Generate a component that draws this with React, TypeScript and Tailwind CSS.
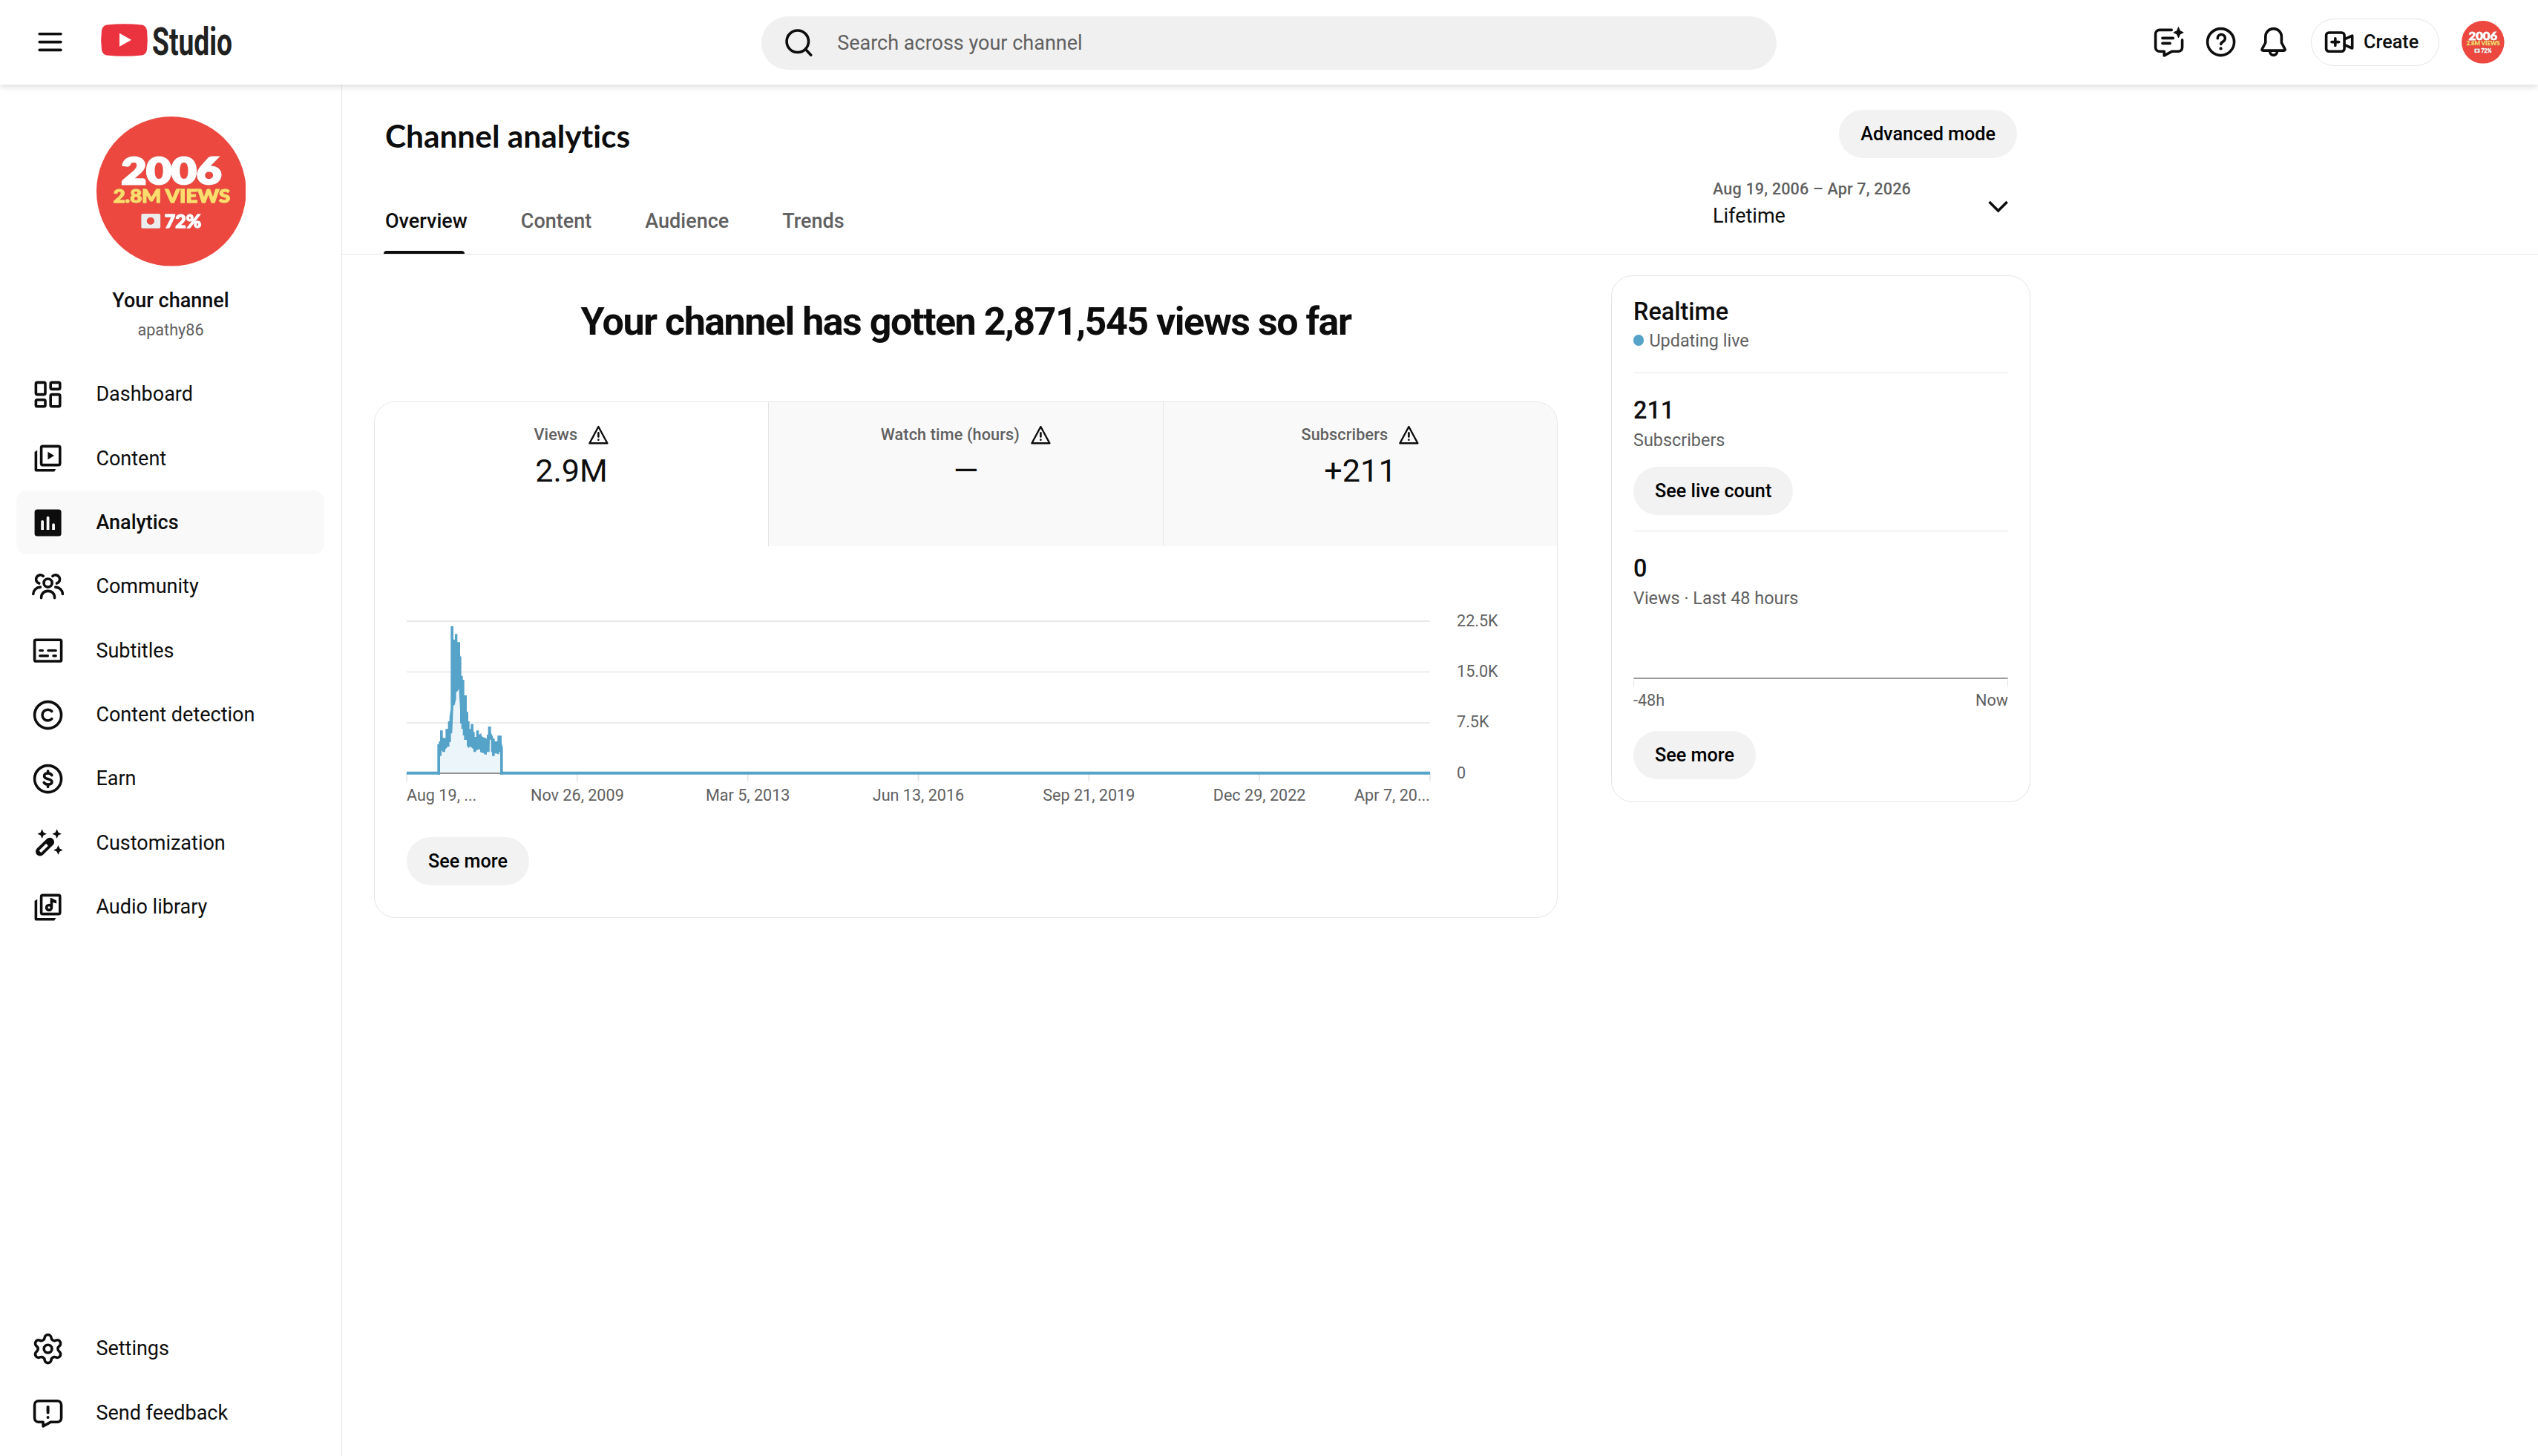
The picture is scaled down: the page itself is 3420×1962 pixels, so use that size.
import type { ReactNode } from "react";

interface IconProps {
  children: ReactNode;
  className?: string;
}

function Icon({ children, className = "size-[43.2px]" }: IconProps) {
  return (
    <svg
      viewBox="0 0 24 24"
      fill="none"
      stroke="currentColor"
      strokeWidth={2}
      strokeLinecap="round"
      strokeLinejoin="round"
      className={`shrink-0 ${className}`}
    >
      {children}
    </svg>
  );
}

const stackFrame = (
  <>
    <rect x="7" y="3" width="14" height="14" rx="1" />
    <path d="M2 7.2L4 6v14h14l-1.2 2H3.5A1.5 1.5 0 0 1 2 20.5z" fill="currentColor" stroke="none" />
  </>
);

const icons: Record<string, ReactNode> = {
  dashboard: (
    <>
      <rect x="3" y="3" width="7" height="9" rx="1" />
      <rect x="14" y="3" width="7" height="5" rx="1" />
      <rect x="3" y="16" width="7" height="5" rx="1" />
      <rect x="14" y="12" width="7" height="9" rx="1" />
    </>
  ),
  content: (
    <>
      {stackFrame}
      <path d="M11.9 7.1l4.8 2.9-4.8 2.9z" fill="currentColor" stroke="none" />
    </>
  ),
  analytics: (
    <>
      <rect x="2" y="2" width="20" height="20" rx="2" fill="currentColor" stroke="none" />
      <g fill="#f9f9f9" stroke="none">
        <path d="M6.8 17.2v-6.2a1.05 1.05 0 0 1 2.1 0v6.2z" />
        <path d="M10.95 17.2v-9a1.05 1.05 0 0 1 2.1 0v9z" />
        <path d="M15.1 17.2v-3.8a1.05 1.05 0 0 1 2.1 0v3.8z" />
      </g>
    </>
  ),
  community: (
    <>
      <circle cx="12" cy="9.2" r="3.1" />
      <path d="M7 20.4c0-3.2 2-5.2 5-5.2s5 2 5 5.2" />
      <path d="M8.5 4.1A3.2 3.2 0 1 0 5.4 9.5M15.5 4.1A3.2 3.2 0 1 1 18.6 9.5" />
      <path d="M1 17.5c.2-3 2.2-5 5.3-5.2M23 17.5c-.2-3-2.2-5-5.3-5.2" />
    </>
  ),
  subtitles: (
    <>
      <rect x="2" y="4" width="20" height="16" rx="1" />
      <path d="M6 12h2M12.2 12h5.7M6 16h5.9M16.1 16h1.8" strokeWidth={1.9} />
    </>
  ),
  copyright: (
    <>
      <circle cx="12" cy="12" r="10" />
      <path d="M14.9 9.2A4.1 4.1 0 1 0 14.9 14.8" />
    </>
  ),
  earn: (
    <>
      <circle cx="12" cy="12" r="10" />
      <path d="M14.9 9.2c-.5-.9-1.5-1.4-2.9-1.4-1.7 0-2.8.8-2.8 2.1 0 3 5.8 1.3 5.8 4.3 0 1.3-1.3 2-3 2-1.5 0-2.5-.6-3-1.5M12 6.1v1.5M12 16.5v1.5" />
    </>
  ),
  customization: (
    <>
      <path d="M6.1 18.1l7.3-7.2" strokeWidth={6.6} />
      <path d="M6.1 18.1l5.3-5.2" stroke="#fff" strokeWidth={2.2} strokeLinecap="butt" />
      <g fill="currentColor" stroke="none">
        <path d="M7.6 1.3l1.1 2.4 2.4 1.1-2.4 1.1-1.1 2.4-1.1-2.4-2.4-1.1 2.4-1.1z" />
        <path d="M18.7 1.3l1.1 2.4 2.4 1.1-2.4 1.1-1.1 2.4-1.1-2.4-2.4-1.1 2.4-1.1z" />
        <path d="M19.7 13.4l1.1 2.4 2.4 1.1-2.4 1.1-1.1 2.4-1.1-2.4-2.4-1.1 2.4-1.1z" />
      </g>
    </>
  ),
  audio: (
    <>
      {stackFrame}
      <circle cx="12.8" cy="12.2" r="1.9" />
      <path d="M13.7 12V5.2l.8-.2 3.9 1.9v2.3l-2.7-.8V12z" fill="currentColor" stroke="none" />
    </>
  ),
  settings: (
    <>
      <path
        transform="translate(12 12) scale(1.06) translate(-12 -12)"
        strokeWidth={1.88}
        d="M9.671 4.136a2.34 2.34 0 0 1 4.659 0 2.34 2.34 0 0 0 3.319 1.915 2.34 2.34 0 0 1 2.33 4.033 2.34 2.34 0 0 0 0 3.831 2.34 2.34 0 0 1-2.33 4.033 2.34 2.34 0 0 0-3.319 1.915 2.34 2.34 0 0 1-4.659 0 2.34 2.34 0 0 0-3.32-1.915 2.34 2.34 0 0 1-2.33-4.033 2.34 2.34 0 0 0 0-3.831A2.34 2.34 0 0 1 6.35 6.051a2.34 2.34 0 0 0 3.319-1.915"
      />
      <circle cx="12" cy="12" r="3" />
    </>
  ),
  feedback: (
    <>
      <path d="M5 3.2h14a3 3 0 0 1 3 3V16a3 3 0 0 1-3 3h-4.8l-5.8 3.2V19H5a3 3 0 0 1-3-3V6.2a3 3 0 0 1 3-3z" />
      <path d="M12 7.7v4.2M12 15.5v.1" strokeWidth={2.2} />
    </>
  ),
};

interface NavItem {
  label: string;
  icon: string;
  active?: boolean;
}

const mainNav: NavItem[] = [
  { label: "Dashboard", icon: "dashboard" },
  { label: "Content", icon: "content" },
  { label: "Analytics", icon: "analytics", active: true },
  { label: "Community", icon: "community" },
  { label: "Subtitles", icon: "subtitles" },
  { label: "Content detection", icon: "copyright" },
  { label: "Earn", icon: "earn" },
  { label: "Customization", icon: "customization" },
  { label: "Audio library", icon: "audio" },
];

const footerNav: NavItem[] = [
  { label: "Settings", icon: "settings" },
  { label: "Send feedback", icon: "feedback" },
];

const tabs = ["Overview", "Content", "Audience", "Trends"];

const metrics = [
  { label: "Views", value: "2.9M", cell: "w-[530px] bg-white" },
  { label: "Watch time (hours)", value: "—", cell: "w-[532px] bg-[#f9f9f9] border-l border-[#e5e5e5]" },
  { label: "Subscribers", value: "+211", cell: "flex-1 bg-[#f9f9f9] border-l border-[#e5e5e5]" },
];

const yLabels = ["22.5K", "15.0K", "7.5K", "0"];
const xLabels = ["Nov 26, 2009", "Mar 5, 2013", "Jun 13, 2016", "Sep 21, 2019", "Dec 29, 2022"];

const highs =
  "268,608 274,608 274,597 279,597 279,553 290,553 290,581 301,585 301,547 311,547 311,516 317,516 317,500 322,465 322,131 333,131 333,185 339,185 339,163 349,163 349,196 360,196 360,250 365,257 365,332 371,332 371,348 377,348 377,411 387,411 387,478 393,478 393,516 398,516 398,547 403,547 403,527 414,527 414,558 419,560 419,579 425,579 425,553 436,553 436,570 446,564 446,573 452,580 463,583 468,587 468,570 473,570 473,537 485,537 485,562 492,577 496,587 500,587 500,597 511,597 511,574 528,574 528,604 533,622 533,731";
const lows =
  "522,731 522,640 518,640 518,650 506,646 500,646 500,656 489,656 489,640 485,640 485,590 480,590 479,640 468,640 468,650 457,650 457,645 447,643 441,640 441,629 436,629 425,634 425,640 414,640 414,629 408,623 400,618 393,625 387,613 387,591 376,591 376,573 371,573 371,547 365,547 365,525 360,525 360,470 355,385 349,395 344,398 344,425 338,450 333,453 328,565 323,565 323,600 317,600 317,618 311,618 300,630 300,640 290,640 285,634 285,656 279,656 279,731";

function Avatar({ className }: { className: string }) {
  return (
    <svg viewBox="0 0 112 112" className={`shrink-0 ${className}`}>
      <circle cx="56" cy="56" r="56" fill="#ec4840" />
      <g className="font-['Lato',sans-serif] font-black drop-shadow-[0.8px_0.8px_0.3px_#8e2a25]">
        <text x="18.6" y="50.5" fontSize="27.5" textLength="75" lengthAdjust="spacingAndGlyphs" fill="#fff" stroke="#fff" strokeWidth="1.6">
          2006
        </text>
        <text x="12.6" y="64.3" fontSize="13.8" textLength="87.5" lengthAdjust="spacingAndGlyphs" fill="#fbdc6c" stroke="#fbdc6c" strokeWidth=".8">
          2.8M VIEWS
        </text>
        <path
          d="M34.5 72.8h12.4a1 1 0 0 1 1 1v9a1 1 0 0 1-1 1H34.5a1 1 0 0 1-1-1v-9a1 1 0 0 1 1-1zM40.5 75.4a2.8 2.8 0 1 0 .001 0z"
          fill="#ececec"
          fillRule="evenodd"
        />
        <text x="51" y="83.3" fontSize="14" textLength="27.5" lengthAdjust="spacingAndGlyphs" fill="#fff" stroke="#fff" strokeWidth=".8">
          72%
        </text>
      </g>
    </svg>
  );
}

function NavRow({ item }: { item: NavItem }) {
  return (
    <a
      className={`flex h-[86.4px] items-center gap-[43.2px] rounded-[14.4px] pl-[21px] text-[27px] ${
        item.active ? "bg-[#f9f9f9] font-medium" : ""
      }`}
    >
      <Icon>{icons[item.icon]}</Icon>
      <span>{item.label}</span>
    </a>
  );
}

function PillButton({ children, className = "self-start" }: { children: ReactNode; className?: string }) {
  return (
    <button
      type="button"
      className={`flex h-[65px] shrink-0 items-center rounded-full bg-[#f2f2f2] px-[29px] text-[25.2px] font-medium whitespace-nowrap text-black ${className}`}
    >
      {children}
    </button>
  );
}

function TopBar() {
  return (
    <header className="relative z-10 flex h-[114px] shrink-0 items-center bg-white shadow-[0_2px_9px_rgba(0,0,0,0.16)]">
      <div className="flex w-[1026px] items-center gap-[47px] pl-[46px]">
        <Icon>
          <path d="M4 6h16M4 12h16M4 18h16" />
        </Icon>
        <svg viewBox="0 0 180 44" className="mb-1.5 h-[44px] w-[180px] overflow-visible">
          <path
            d="M8 1.5Q31.5-1.2 55 1.5 61 2.5 62 9q1.7 13 0 26-1 6.5-7 7.5Q31.5 45.2 8 42.5 2 41.5 1 35-.7 22 1 9 2 2.5 8 1.5z"
            fill="#eb3340"
          />
          <path d="M25 12.8v18l16-9z" fill="#fff" />
          <text
            x="69"
            y="41.5"
            fontSize="52"
            textLength="108"
            lengthAdjust="spacingAndGlyphs"
            fill="#212121"
            className="font-['Roboto',sans-serif] font-bold"
          >
            Studio
          </text>
        </svg>
      </div>

      <div className="mt-0.5 flex h-[72px] w-[1368px] items-center gap-[30px] rounded-full bg-[#f0f0f0] pl-[29px] text-[27px] text-[#606060]">
        <Icon className="size-[43.2px] text-[#0d0d0d]">
          <circle cx="11" cy="11" r="8.2" />
          <path d="M17 17l4 4.2" />
        </Icon>
        <span>Search across your channel</span>
      </div>

      <div className="flex flex-1 items-center justify-end pr-[45px]">
        <Icon className="mr-[26.5px] size-[43.2px]">
          <path d="M14 3H5a3 3 0 0 0-3 3v10a3 3 0 0 0 3 3h3.5v3.2l6-3.2H19a3 3 0 0 0 3-3v-5.5" />
          <path d="M7.2 9.1h8M7.2 13h5.7" />
          <path d="M19.2 1l1.2 2.7 2.5 1.2-2.5 1.2-1.2 2.7L18 6.1l-2.5-1.2L18 3.7z" fill="currentColor" strokeWidth={0.5} />
        </Icon>
        <Icon className="mr-[28.5px] size-[43.2px]">
          <circle cx="12" cy="12" r="10" />
          <path d="M9.6 9.3A2.8 2.8 0 1 1 13.8 11.6C12.7 12.3 12.1 12.7 12.1 13.6" />
          <path d="M12 16.8v.1" strokeWidth={2.3} />
        </Icon>
        <Icon className="mr-[29px] size-[43.2px]">
          <path d="M12 2a6 6 0 0 0-6 6v4.5l-2.5 4.7q-.5 1.2.8 1.2h15.4q1.3 0 .8-1.2L18 12.5V8a6 6 0 0 0-6-6z" />
          <path d="M9.3 18.8v.4a2.7 2.7 0 0 0 5.4 0v-.4" />
        </Icon>
        <button
          type="button"
          className="mr-[30px] flex h-[64px] w-[173px] items-center gap-[10.5px] rounded-full border border-[#e5e5e5] pl-[16px] text-[25.2px] font-medium"
        >
          <Icon>
            <rect x="2" y="5" width="13.6" height="14" rx="2" />
            <path d="M16 9.8l5.5-2.5v9.4L16 14.2M8.8 9.3v5.4M6.1 12h5.4" />
          </Icon>
          Create
        </button>
        <Avatar className="size-[57.6px]" />
      </div>
    </header>
  );
}

function Sidebar() {
  return (
    <aside className="flex w-[461px] shrink-0 flex-col border-r border-[#e5e5e5] pt-[43px] pb-[15px]">
      <Avatar className="ml-px size-[201.6px] self-center" />
      <p className="mt-[26px] text-center text-[27px] leading-[40px] font-medium">Your channel</p>
      <p className="text-center text-[21.6px] leading-[40px] text-[#606060]">apathy86</p>
      <nav className="mt-[23.6px] flex flex-1 flex-col pr-[23px] pl-[22px]">
        {mainNav.map((item) => (
          <NavRow key={item.label} item={item} />
        ))}
        <div className="mt-auto">
          {footerNav.map((item) => (
            <NavRow key={item.label} item={item} />
          ))}
        </div>
      </nav>
    </aside>
  );
}

function PageHeader() {
  return (
    <div className="h-[229px] border-b border-[#e5e5e5]">
      <div className="flex h-full w-[2257px] justify-between pl-[58px]">
        <div className="flex flex-col pt-[43px]">
          <h1 className="font-['Lato',sans-serif] text-[42.4px] leading-[52px] font-bold [font-variant-ligatures:none]">
            Channel analytics
          </h1>
          <div className="mt-auto flex gap-[72px] text-[27px] font-medium text-[#606060]">
            {tabs.map((tab, i) => (
              <div key={tab} className={`relative h-[89px] leading-[90px] ${i === 0 ? "text-[#0d0d0d]" : ""}`}>
                {tab}
                {i === 0 && <span className="absolute bottom-0 -left-0.5 h-1 w-[109px] rounded-t-sm bg-[#0d0d0d]" />}
              </div>
            ))}
          </div>
        </div>

        <div className="flex w-[410px] flex-col pt-[34px]">
          <PillButton className="self-end">Advanced mode</PillButton>
          <div className="mt-[24px] flex items-center justify-between pr-[4px]">
            <div>
              <p className="text-[21.6px] leading-[36px] font-medium tracking-[0.15px] text-[#606060]">
                Aug 19, 2006 – Apr 7, 2026
              </p>
              <p className="text-[27px] leading-[36px]">Lifetime</p>
            </div>
            <Icon className="mt-[12px] size-[43.2px]">
              <path d="M6 9l6 6 6-6" strokeLinecap="square" strokeLinejoin="miter" />
            </Icon>
          </div>
        </div>
      </div>
    </div>
  );
}

function ViewsChart() {
  return (
    <div className="mt-[97px] ml-[43px] flex gap-[36px] text-[21.6px] text-[#606060]">
      <div className="w-[1379px]">
        <svg viewBox="144 99 4137 666" className="h-[222px] w-[1379px] overflow-visible">
          <path d="M144 111.5H4281M144 316.5H4281M144 522H4281" stroke="#e6e6e6" strokeWidth={5} />
          <path
            d="M144 726v33M833.5 726v33M1523 726v33M2212.5 726v33M2902 726v33M3591.5 726v33M4281 726v33"
            stroke="#e5e5e5"
            strokeWidth={5}
          />
          <path d="M144 726H4281" stroke="#939393" strokeWidth={6} />
          <polygon points={`${lows} 279,723 522,723`} fill="#56a3c9" fillOpacity={0.11} />
          <polygon points={`${highs} ${lows} 268,731`} fill="#56a3c9" />
          <path d="M144 725.5H279M522 725.5H4281" stroke="#56a3c9" strokeWidth={12} />
        </svg>
        <div className="flex justify-between leading-[33px]">
          <span className="w-[115px]">Aug 19, ...</span>
          {xLabels.map((label) => (
            <span key={label} className="w-[229.8px] text-center">
              {label}
            </span>
          ))}
          <span className="w-[115px] text-right">Apr 7, 20...</span>
        </div>
      </div>
      <div className="-mt-[12.4px] flex flex-col gap-[36.4px] leading-[32px]">
        {yLabels.map((label) => (
          <span key={label}>{label}</span>
        ))}
      </div>
    </div>
  );
}

function OverviewCard() {
  return (
    <section className="mt-[77px] h-[696px] w-[1595px] overflow-hidden rounded-[28.8px] border border-[#e5e5e5]">
      <div className="flex h-[194px]">
        {metrics.map((m) => (
          <div key={m.label} className={`flex flex-col items-center pt-[24px] ${m.cell}`}>
            <div className="flex h-[40px] items-center gap-[13.5px] text-[21.6px] font-medium tracking-[0.15px] text-[#606060]">
              {m.label}
              <Icon className="size-[28.8px] text-[#0d0d0d]">
                <path d="M12 2.5L22 21H2z" />
                <path d="M12 9.5v4.2M12 17.2v.1" strokeWidth={2.2} />
              </Icon>
            </div>
            <p className="mt-[3.5px] text-[43.2px] leading-[50px]">{m.value}</p>
          </div>
        ))}
      </div>
      <ViewsChart />
      <PillButton className="mt-[40px] ml-[43px]">See more</PillButton>
    </section>
  );
}

function RealtimeCard() {
  return (
    <aside className="mt-[28px] ml-[72px] flex h-[710px] w-[565px] flex-col rounded-[28.8px] border border-[#e5e5e5] px-[29px] pt-[28px] text-[23.4px] text-[#606060]">
      <h3 className="text-[32.4px] leading-[40px] font-medium text-[#0d0d0d]">Realtime</h3>
      <div className="flex h-[39px] items-center gap-[7px]">
        <span className="mb-0.5 size-[14.4px] rounded-full bg-[#56a3c9]" />
        Updating live
      </div>
      <hr className="mt-[23px] border-[#e5e5e5]" />
      <p className="mt-[30px] text-[32.4px] leading-[40px] font-medium text-[#0d0d0d]">211</p>
      <p className="leading-[40px]">Subscribers</p>
      <PillButton className="mt-[16px] self-start">See live count</PillButton>
      <hr className="mt-[21px] border-[#e5e5e5]" />
      <p className="mt-[30px] text-[32.4px] leading-[40px] font-medium text-[#0d0d0d]">0</p>
      <p className="leading-[40px]">Views · Last 48 hours</p>
      <div className="mt-[87px] h-[12px] border-x border-t-2 border-x-[#e5e5e5] border-t-[#9e9e9e]" />
      <div className="flex justify-between text-[21.6px] leading-[37px]">
        <span>-48h</span>
        <span>Now</span>
      </div>
      <PillButton className="mt-[23px] self-start">See more</PillButton>
    </aside>
  );
}

export default function App() {
  return (
    <div className="flex h-[1962px] w-[3420px] flex-col overflow-hidden bg-white font-['Roboto',sans-serif] text-[#0d0d0d]">
      <TopBar />
      <div className="flex min-h-0 flex-1">
        <Sidebar />
        <main className="flex-1">
          <PageHeader />
          <div className="flex items-start pl-[43px]">
            <div className="flex w-[1595px] flex-col pt-[60px]">
              <h2 className="text-center text-[52px] leading-[61px] font-bold tracking-[-1.5px]">
                Your channel has gotten 2,871,545 views so far
              </h2>
              <OverviewCard />
            </div>
            <RealtimeCard />
          </div>
        </main>
      </div>
    </div>
  );
}
